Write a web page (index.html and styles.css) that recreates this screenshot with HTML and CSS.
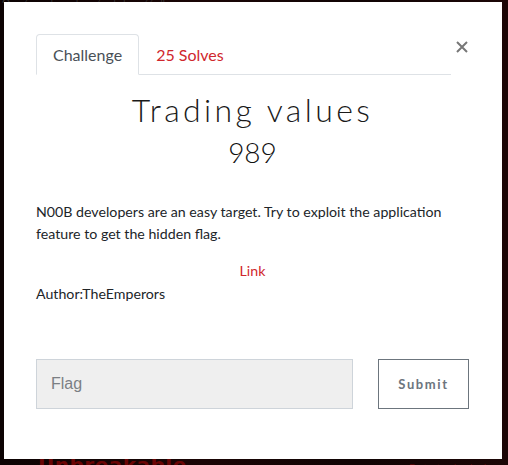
FILE: index.html
```html
<!DOCTYPE html>
<html>
<head>
<meta charset="utf-8">
<link rel="stylesheet" href="styles.css">
</head>
<body>
<div class="page">
  <div class="page-top">Ω &nbsp; &nbsp; ∕ &nbsp; &nbsp; &nbsp; &nbsp; ǀ &nbsp; &nbsp; &nbsp; &nbsp; ǀ &nbsp; &nbsp; &nbsp; ∕ &nbsp; &nbsp; ǀ &nbsp; ǀ &nbsp; &nbsp; &nbsp; ∕∕ &nbsp; ǀǀ</div>
  <div class="page-bottom">
    <span class="bg-title">Unbreakable Uploader</span>
    <span class="bg-small">Fastest uploader in town</span>
  </div>
</div>
<div class="modal">
  <div class="modal-head">
    <ul class="tabs">
      <li class="tab active">Challenge</li>
      <li class="tab solves">25 Solves</li>
    </ul>
    <button class="close" aria-label="Close">
      <svg width="12" height="12" viewBox="0 0 12 12"><path d="M1 1 L11 11 M11 1 L1 11" stroke="#777" stroke-width="2" fill="none"/></svg>
    </button>
  </div>
  <h3 class="name">Trading values</h3>
  <h4 class="value">989</h4>
  <p class="desc">N00B developers are an easy target. Try to exploit the application feature to get the hidden flag.</p>
  <p class="link"><a href="#">Link</a></p>
  <p class="author">Author:TheEmperors</p>
  <div class="submit-row">
    <input class="flag" type="text" placeholder="Flag">
    <button class="submit">Submit</button>
  </div>
</div>
</body>
</html>
```
FILE: styles.css
```css
html, body {
  margin: 0;
  padding: 0;
  height: 465px;
  overflow: hidden;
}
body {
  background: #0a0404;
  font-family: Lato, "Liberation Sans", sans-serif;
  position: relative;
}
.page {
  height: 465px;
  position: relative;
  overflow: hidden;
  background: linear-gradient(90deg, #0c0303 0%, #1a0505 40%, #100404 70%, #1c0606 100%);
}
.page-top {
  color: #3a3a3a;
  font-size: 10px;
  line-height: 4px;
  padding-left: 2px;
  white-space: nowrap;
  overflow: hidden;
  height: 3px;
}
.page-bottom {
  position: absolute;
  left: 38px;
  top: 453px;
  display: flex;
  gap: 130px;
  align-items: flex-start;
}
.bg-title {
  color: #6a0505;
  font-family: "DejaVu Sans", sans-serif;
  font-weight: bold;
  font-size: 20px;
  line-height: 24px;
  letter-spacing: 0.5px;
}
.bg-small {
  color: #5a0505;
  font-size: 10px;
  line-height: 12px;
  margin-top: 8px;
}
.modal {
  position: absolute;
  left: 4px;
  top: 2px;
  width: 498px;
  height: 457px;
  box-sizing: border-box;
  background: #fff;
  padding: 32px 33px 0 32px;
}
.modal-head {
  display: flex;
  align-items: flex-start;
}
.tabs {
  list-style: none;
  margin: 0;
  padding: 0;
  display: flex;
  flex: 1;
  border-bottom: 1px solid #dee2e6;
  height: 41px;
  box-sizing: border-box;
}
.tab {
  font-size: 16px;
  line-height: 20px;
  padding: 10px 16px 10px 16px;
  border: 1px solid transparent;
  border-top-left-radius: 4px;
  border-top-right-radius: 4px;
  margin-bottom: -1px;
  height: 41px;
  box-sizing: border-box;
}
.tab.active {
  color: #495057;
  border-color: #dee2e6 #dee2e6 #fff;
  background: #fff;
}
.tab.solves {
  color: #d0272d;
}
.close {
  border: 0;
  background: none;
  padding: 0;
  margin: 6px 0 0 4px;
  width: 14px;
  height: 14px;
  display: flex;
  align-items: center;
  justify-content: center;
}
.name {
  margin: 16px 0 0;
  text-align: center;
  font-weight: 300;
  font-size: 32px;
  line-height: 38px;
  letter-spacing: 3.4px;
  color: #1a1a1a;
}
.value {
  margin: 6px 0 0;
  text-align: center;
  font-weight: 300;
  font-size: 28px;
  line-height: 34px;
  color: #111;
}
.desc {
  margin: 32px 0 0;
  font-size: 14.2px;
  line-height: 22px;
  color: #212529;
}
.link {
  margin: 15px 0 0;
  text-align: center;
  font-size: 14.2px;
  line-height: 22px;
}
.link a {
  color: #d0272d;
  text-decoration: none;
}
.author {
  margin: 1px 0 0;
  font-size: 14.2px;
  line-height: 22px;
  color: #212529;
}
.submit-row {
  display: flex;
  gap: 25px;
  margin-top: 54px;
}
.flag {
  width: 317px;
  height: 50px;
  box-sizing: border-box;
  border: 1px solid #ced4da;
  background: #efefef;
  padding: 0 14px;
  font-family: "Liberation Sans", Arial, sans-serif;
  font-size: 16px;
  color: #495057;
  outline: none;
}
.flag::placeholder {
  color: #7b7f84;
}
.submit {
  width: 91px;
  height: 50px;
  box-sizing: border-box;
  border: 1px solid #6c757d;
  background: #fff;
  color: #6c757d;
  font-family: Lato, "Liberation Sans", sans-serif;
  font-weight: 700;
  font-size: 13px;
  letter-spacing: 1.6px;
}
```
